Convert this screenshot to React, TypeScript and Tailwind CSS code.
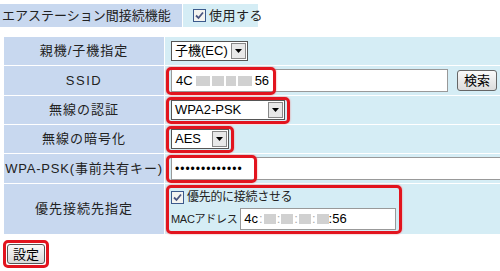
import React from "react";

const font = { fontFamily: '"Liberation Sans", "Noto Sans CJK JP", sans-serif' };

function Checkbox() {
  return (
    <span className="inline-flex h-[13px] w-[13px] shrink-0 items-center justify-center border border-[#3c5a8c] bg-[#f4f4f0]">
      <svg width="9" height="9" viewBox="0 0 9 9">
        <path d="M1 4.5 L3.5 7 L8 1.5" fill="none" stroke="#4a5680" strokeWidth="1.8" />
      </svg>
    </span>
  );
}

function Select({ value, width }: { value: string; width: string }) {
  return (
    <div className={`flex h-[20px] items-stretch overflow-hidden border border-[#555] bg-white ${width}`}>
      <span className="flex-1 whitespace-nowrap pl-[3px] text-[13px] leading-[18px] text-black">{value}</span>
      <span className="m-[1px] flex w-[15px] shrink-0 items-center justify-center border border-[#888] bg-[#e8e8e8]">
        <svg width="7" height="4" viewBox="0 0 7 4">
          <path d="M0 0 H7 L3.5 4 Z" fill="#000" />
        </svg>
      </span>
    </div>
  );
}

function Mark({ className }: { className: string }) {
  return (
    <div
      className={`pointer-events-none absolute rounded-[5px] border-[3px] border-[#e2141e] shadow-[0_0_2px_#f08080] ${className}`}
    />
  );
}

function Label({ children, track = "tracking-[1px]" }: { children: React.ReactNode; track?: string }) {
  return (
    <div className={`flex items-center justify-center whitespace-nowrap bg-[#c8d8ef] text-[13px] text-[#222] ${track}`}>
      {children}
    </div>
  );
}

function Blur({ w }: { w: string }) {
  return <span className={`h-[10px] bg-[#bdbdbd] opacity-70 ${w}`} />;
}

export default function App() {
  return (
    <div className="h-[271px] w-[500px] overflow-hidden bg-white" style={font}>
      {/* top setting */}
      <div className="flex gap-px pt-[4px]">
        <div className="flex h-[23px] w-[182px] items-center whitespace-nowrap bg-[#c8d8ef] pl-[2px] text-[13px] text-[#222]">
          エアステーション間接続機能
        </div>
        <div className="flex h-[23px] w-[75px] items-center gap-[3px] whitespace-nowrap bg-[#d5edf5] pl-[10px] text-[13px] tracking-[0.5px] text-[#222]">
          <Checkbox />
          <span>使用する</span>
        </div>
      </div>

      {/* main table */}
      <div className="ml-[4px] mt-[10px] grid grid-cols-[160px_1fr] grid-rows-[28px_29px_28px_28px_29px_50px] gap-px">
        <Label>親機/子機指定</Label>
        <div className="flex items-center bg-[#d5edf5] pl-[6px]">
          <Select value="子機(EC)" width="w-[77px]" />
        </div>

        <Label track="tracking-[1.5px]">SSID</Label>
        <div className="relative flex items-center bg-[#d5edf5] pl-[6px]">
          <div className="flex h-[23px] w-[277px] items-center border border-[#999] bg-white pl-[4px] text-[13px] text-black">
            <span>4C</span>
            <span className="ml-[3px] flex gap-[2px]">
              <Blur w="w-[14px]" />
              <Blur w="w-[12px]" />
              <Blur w="w-[10px]" />
              <Blur w="w-[14px]" />
            </span>
            <span className="ml-[3px]">56</span>
          </div>
          <button className="ml-[9px] h-[21px] w-[40px] rounded-[3px] border border-[#666] bg-gradient-to-b from-[#fafafa] to-[#dcdcdc] text-[13px] leading-[18px] text-black">
            検索
          </button>
          <Mark className="left-[1px] top-[1px] h-[28px] w-[110px]" />
        </div>

        <Label>無線の認証</Label>
        <div className="relative flex items-center bg-[#d5edf5] pl-[6px]">
          <Select value="WPA2-PSK" width="w-[114px]" />
          <Mark className="left-[1px] top-[1px] h-[27px] w-[124px]" />
        </div>

        <Label>無線の暗号化</Label>
        <div className="relative flex items-center bg-[#d5edf5] pl-[6px]">
          <Select value="AES" width="w-[58px]" />
          <Mark className="left-[1px] top-[1px] h-[27px] w-[68px]" />
        </div>

        <Label track="tracking-[0.8px]">WPA-PSK(事前共有キー)</Label>
        <div className="relative flex items-center bg-[#d5edf5] pl-[6px]">
          <div className="flex h-[23px] flex-1 items-center border-y border-l border-[#999] bg-white pl-[3px] text-[12px] tracking-[1px] text-black">
            •••••••••••••
          </div>
          <Mark className="left-[1px] top-[1px] h-[28px] w-[91px]" />
        </div>

        <Label>優先接続先指定</Label>
        <div className="relative flex flex-col justify-center gap-[2px] bg-[#d5edf5] pl-[6px]">
          <div className="flex items-center gap-[3px] whitespace-nowrap text-[12px] tracking-[-0.3px] text-[#222]">
            <Checkbox />
            <span>優先的に接続させる</span>
          </div>
          <div className="flex items-center gap-[3px]">
            <span className="whitespace-nowrap text-[11px] tracking-[-0.3px] text-[#222]">MACアドレス</span>
            <div className="flex h-[22px] w-[156px] items-center border border-[#999] bg-white pl-[3px] text-[13px] text-black">
              4c
              <span className="mx-[1px] text-[#aaa]">:</span>
              <Blur w="w-[12px]" />
              <span className="mx-[1px] text-[#aaa]">:</span>
              <Blur w="w-[12px]" />
              <span className="mx-[1px] text-[#aaa]">:</span>
              <Blur w="w-[12px]" />
              <span className="mx-[1px] text-[#aaa]">:</span>
              <Blur w="w-[12px]" />
              :56
            </div>
          </div>
          <Mark className="left-[1px] top-[1px] h-[49px] w-[236px]" />
        </div>
      </div>

      {/* submit */}
      <div className="ml-[3px] mt-[6px] inline-flex rounded-[5px] border-[3px] border-[#e2141e] p-[1px]">
        <button className="h-[20px] w-[38px] rounded-[3px] border border-[#555] bg-gradient-to-b from-[#fafafa] to-[#d8d8d8] text-[13px] leading-[17px] text-black">
          設定
        </button>
      </div>
    </div>
  );
}
